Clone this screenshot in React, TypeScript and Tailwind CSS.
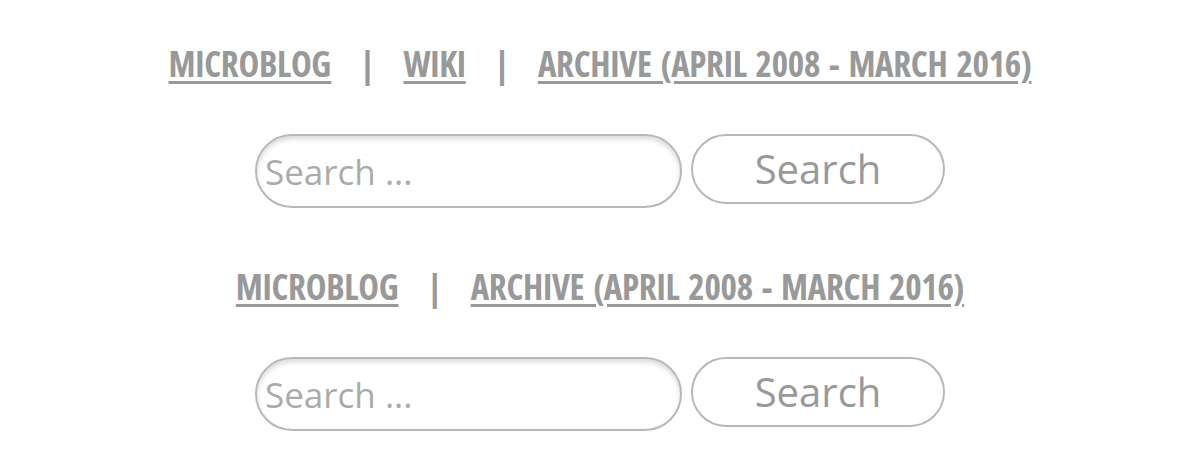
import React from "react";

function NavLinks({ items }: { items: string[] }) {
  return (
    <div className="h-[48px] flex items-center justify-center text-[35px] font-bold font-stretch-condensed tracking-[-0.3px] [word-spacing:3px] text-[#999999]" style={{ fontFamily: '"Open Sans", sans-serif' }}>
      {items.map((item, i) => (
        <React.Fragment key={item}>
          {i > 0 && <span className="mx-[29px]">|</span>}
          <a href="#" className="underline decoration-[3px] underline-offset-[4px]">
            {item}
          </a>
        </React.Fragment>
      ))}
    </div>
  );
}

function SearchForm() {
  return (
    <form className="flex items-start justify-center gap-[9px]" onSubmit={(e) => e.preventDefault()}>
      <input
        type="search"
        placeholder="Search ..."
        className="w-[427px] h-[74px] rounded-full border-2 border-[#b8b8b8] shadow-[inset_0_3px_5px_rgba(0,0,0,0.15)] px-[8px] text-[35px] text-[#999] placeholder:text-[#ababab] outline-none"
        style={{ fontFamily: '"Open Sans", sans-serif' }}
      />
      <button
        type="submit"
        className="w-[254px] h-[70px] rounded-full border-2 border-[#b8b8b8] bg-white text-[40px] text-[#999999]"
        style={{ fontFamily: '"Open Sans", sans-serif' }}
      >
        Search
      </button>
    </form>
  );
}

export default function App() {
  return (
    <div className="w-[1200px] h-[464px] bg-white pt-[40px] overflow-hidden">
      <NavLinks items={["MICROBLOG", "WIKI", "ARCHIVE (APRIL 2008 - MARCH 2016)"]} />
      <div className="mt-[46px]">
        <SearchForm />
      </div>
      <div className="mt-[55px]">
        <NavLinks items={["MICROBLOG", "ARCHIVE (APRIL 2008 - MARCH 2016)"]} />
      </div>
      <div className="mt-[46px]">
        <SearchForm />
      </div>
    </div>
  );
}
